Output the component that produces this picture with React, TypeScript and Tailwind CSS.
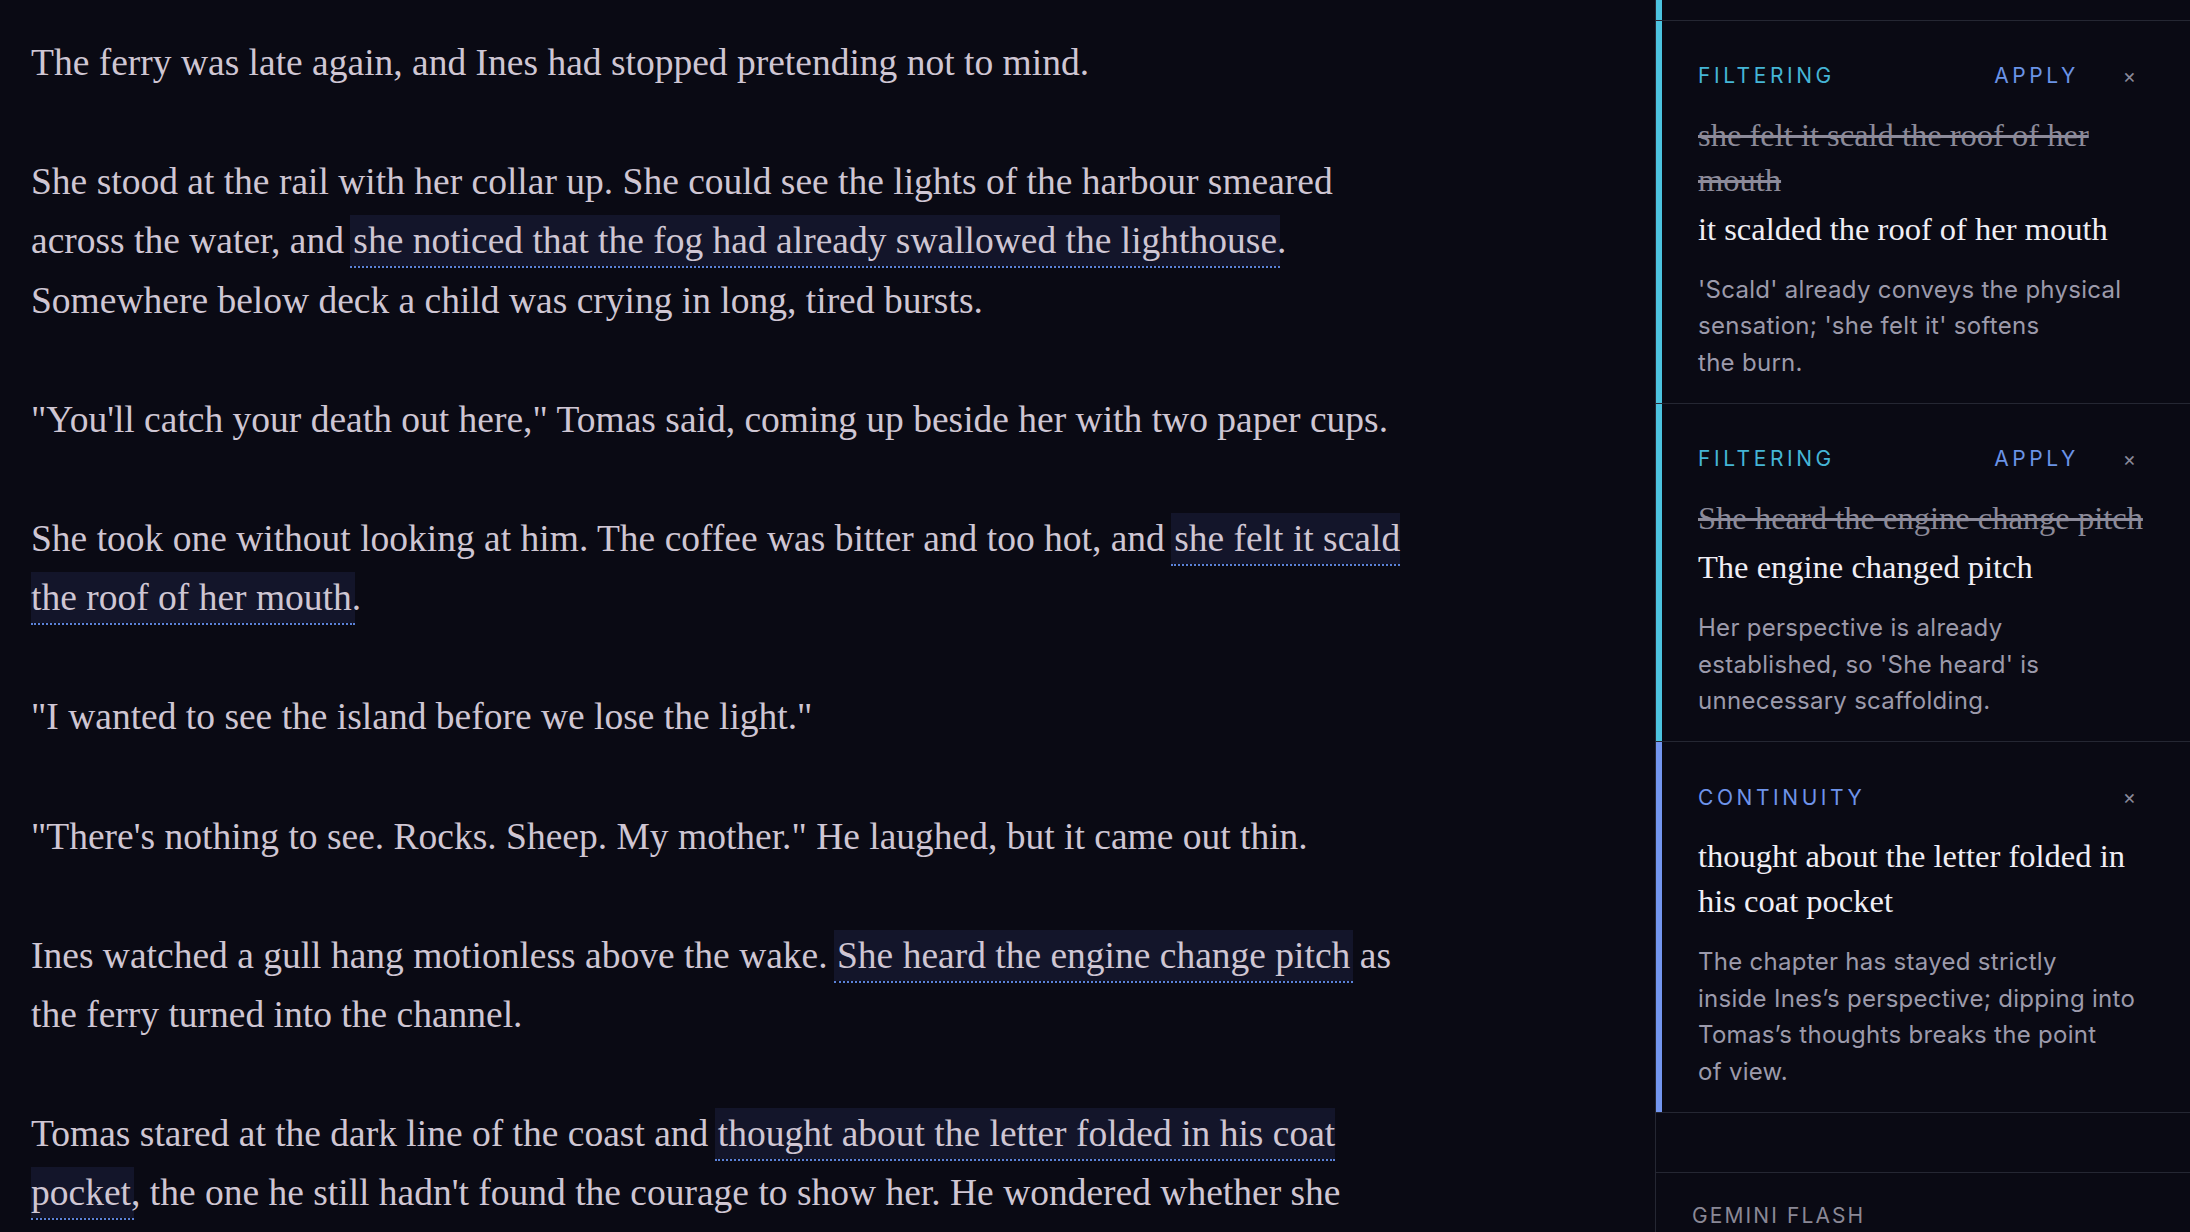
import React from "react";

type Seg = string | { hl: string };

const paragraphs: Seg[][] = [
  ["The ferry was late again, and Ines had stopped pretending not to mind."],
  [
    "She stood at the rail with her collar up. She could see the lights of the harbour smeared across the water, and ",
    { hl: "she noticed that the fog had already swallowed the lighthouse" },
    ". Somewhere below deck a child was crying in long, tired bursts.",
  ],
  ['"You\'ll catch your death out here," Tomas said, coming up beside her with two paper cups.'],
  [
    "She took one without looking at him. The coffee was bitter and too hot, and ",
    { hl: "she felt it scald the roof of her mouth" },
    ".",
  ],
  ['"I wanted to see the island before we lose the light."'],
  ['"There\'s nothing to see. Rocks. Sheep. My mother." He laughed, but it came out thin.'],
  [
    "Ines watched a gull hang motionless above the wake. ",
    { hl: "She heard the engine change pitch" },
    " as the ferry turned into the channel.",
  ],
  [
    "Tomas stared at the dark line of the coast and ",
    { hl: "thought about the letter folded in his coat pocket" },
    ", the one he still hadn't found the courage to show her. He wondered whether she would ever read it, or whether it would simply stay there until the paper went soft.",
  ],
];

interface Suggestion {
  id: number;
  kind: "FILTERING" | "CONTINUITY";
  original?: string;
  replacement: string;
  reason: string[];
}

const suggestions: Suggestion[] = [
  {
    id: 1,
    kind: "FILTERING",
    original: "she felt it scald the roof of her mouth",
    replacement: "it scalded the roof of her mouth",
    reason: ["'Scald' already conveys the physical", "sensation; 'she felt it' softens", "the burn."],
  },
  {
    id: 2,
    kind: "FILTERING",
    original: "She heard the engine change pitch",
    replacement: "The engine changed pitch",
    reason: ["Her perspective is already", "established, so 'She heard' is", "unnecessary scaffolding."],
  },
  {
    id: 3,
    kind: "CONTINUITY",
    replacement: "thought about the letter folded in his coat pocket",
    reason: [
      "The chapter has stayed strictly",
      "inside Ines\u2019s perspective; dipping into",
      "Tomas\u2019s thoughts breaks the point",
      "of view.",
    ],
  },
];

const serif = "font-['Liberation_Serif','Times_New_Roman',serif]";
const sans = "font-['Inter','Noto_Sans',sans-serif]";

function SuggestionCard({ s }: { s: Suggestion }) {
  const filtering = s.kind === "FILTERING";
  return (
    <div className="flex border-b border-[#252733]">
      <div className={filtering ? "w-[6px] shrink-0 bg-[#4cc3e0]" : "w-[6px] shrink-0 bg-[#7396f0]"} />
      <div className="min-w-0 flex-1 pl-[36px] pr-[34px] pt-[38px] pb-[22px]">
        {/* Header */}
        <div className={`flex h-[34px] items-center ${sans}`}>
          <span
            className={
              filtering
                ? "flex-1 text-[21px] tracking-[0.17em] text-[#45b5d6]"
                : "flex-1 text-[21px] tracking-[0.17em] text-[#6e93ea]"
            }
          >
            {s.kind}
          </span>
          {filtering && <button className="text-[21px] tracking-[0.17em] text-[#6b93e6]">APPLY</button>}
          <button className="ml-[44px] mr-[20px] text-[20px] leading-none text-[#8a8a9a]">×</button>
        </div>
        {s.original && (
          <p className={`${serif} mt-[20px] text-[32.5px] leading-[45px] text-[#8c8a99] line-through decoration-[#8c8a99]`}>
            {s.original}
          </p>
        )}
        <p className={`${serif} ${s.original ? "mt-[4px]" : "mt-[20px]"} text-[32.5px] leading-[45px] text-[#f0eef5]`}>
          {s.replacement}
        </p>
        <p className={`${sans} mt-[20px] text-[24px] leading-[36.4px] tracking-[0.012em] text-[#9c9aab]`}>
          {s.reason.map((line, i) => (
            <span key={i} className="block whitespace-nowrap">
              {line}
            </span>
          ))}
        </p>
      </div>
    </div>
  );
}

export default function App() {
  return (
    <div className="flex h-screen w-full overflow-hidden bg-[#0a0a14]">
      {/* Manuscript */}
      <main className="min-w-0 flex-1 pl-[31px] pt-[33px]">
        <div className={`w-[1380px] ${serif} text-[37.5px] leading-[59.2px] text-[#cfc6d3]`}>
          {paragraphs.map((p, i) => (
            <p key={i} className="mb-[60px]">
              {p.map((seg, j) =>
                typeof seg === "string" ? (
                  <React.Fragment key={j}>{seg}</React.Fragment>
                ) : (
                  <span
                    key={j}
                    className="bg-[#13152a] bg-clip-padding py-[5px] px-[3px] -mx-[3px] border-b-2 border-dotted border-[#5b82d9]"
                  >
                    {seg.hl}
                  </span>
                )
              )}
            </p>
          ))}
        </div>
      </main>

      {/* Suggestions sidebar */}
      <aside className="flex w-[535px] shrink-0 flex-col border-l border-[#252733]">
        <div className="flex h-[21px] shrink-0 border-b border-[#252733]">
          <div className="w-[6px] bg-[#4cc3e0]" />
        </div>
        {suggestions.map((s) => (
          <SuggestionCard key={s.id} s={s} />
        ))}
        <div className="h-[60px] shrink-0 border-b border-[#252733]" />
        <div className={`pl-[36px] pt-[28px] ${sans} text-[21px] leading-[30px] tracking-[0.1em] text-[#8a8896]`}>
          GEMINI FLASH
        </div>
      </aside>
    </div>
  );
}
